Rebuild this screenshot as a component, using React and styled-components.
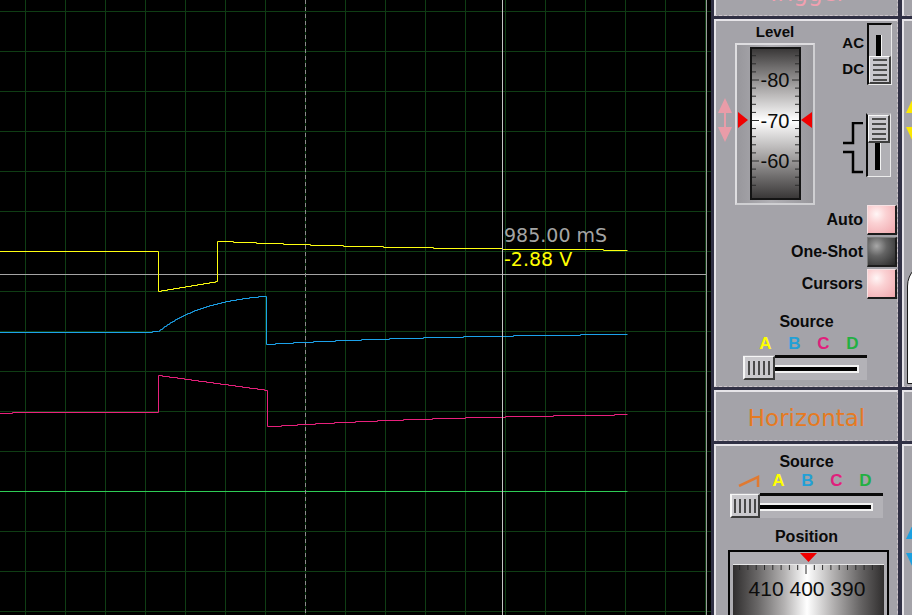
import React from 'react';
import styled, { createGlobalStyle } from 'styled-components';

const GlobalStyle = createGlobalStyle`
  html, body { margin: 0; padding: 0; background: #000; overflow: hidden; }
  body { font-family: "Liberation Sans", Arial, sans-serif; }
`;

/* ---------- plot data ---------- */
const px = (v) => v + 0.5;

function stairs(f, x0, x1) {
  let d = '';
  let prev = Math.round(f(x0));
  for (let x = x0 + 1; x <= x1; x++) {
    const y = Math.round(f(x));
    if (y !== prev) {
      d += ` H${px(x)} V${px(y)}`;
      prev = y;
    }
  }
  return d + ` H${px(x1)}`;
}

function steps(list, end) {
  let d = '';
  list.forEach(([x, y]) => {
    d += ` H${px(x)} V${px(y)}`;
  });
  return d + ` H${px(end)}`;
}

const yellowPath =
  `M0 ${px(251)} H${px(158)} V${px(291)}` +
  stairs((x) => 291 - (10 * (x - 158)) / 59, 158, 217) +
  ` V${px(241)}` +
  steps(
    [
      [233, 242],
      [256, 243],
      [283, 244],
      [310, 245],
      [343, 246],
      [383, 247],
      [433, 248],
      [502, 249],
      [603, 250],
    ],
    627
  );

const bluePath =
  `M0 ${px(332)} H${px(152)} V${px(331)} H${px(158)}` +
  stairs((x) => 331 - 40 * (1 - Math.exp(-(x - 158) / 50)), 158, 266) +
  ` V${px(344)}` +
  stairs((x) => 344 - 12 * (1 - Math.exp(-(x - 266) / 200)), 266, 627);

const pinkPath =
  `M0 ${px(413)} H${px(12)} V${px(412)} H${px(158)} V${px(375)}` +
  stairs((x) => 375 + (15 * (x - 158)) / 109, 158, 267) +
  ` V${px(426)}` +
  stairs((x) => 426.4 - 15 * (1 - Math.exp(-(x - 267) / 220)), 267, 627);

const greenPath = `M0 ${px(491)} H${px(627)}`;

const gridX = Array.from({ length: 18 }, (_, i) => 25 + 40 * i);
const gridY = Array.from({ length: 16 }, (_, i) => 11 + 40 * i);

/* ---------- layout ---------- */
const Screen = styled.div`
  display: flex;
  width: 912px;
  height: 615px;
  overflow: hidden;
  background: #000;
`;

const Scope = styled.div`
  position: relative;
  flex: 0 0 711px;
  height: 615px;
  background: #000;
  overflow: hidden;
`;

const PlotSvg = styled.svg`
  display: block;
`;

const Readout = styled.div`
  position: absolute;
  left: 504px;
  top: ${(p) => p.$top}px;
  font-family: "DejaVu Sans", "Liberation Sans", sans-serif;
  font-size: 19px;
  line-height: 19px;
  color: ${(p) => p.$color};
  white-space: nowrap;
`;

const Panel = styled.div`
  flex: 1 1 auto;
  display: flex;
  gap: 4px;
  height: 615px;
  padding-left: 3px;
  background: #303044;
  overflow: hidden;
`;

const Column = styled.div`
  flex: 0 0 184px;
  width: 184px;
  display: flex;
  flex-direction: column;
  gap: 3px;
  margin-top: -35px;
`;

const Box = styled.div`
  box-sizing: border-box;
  flex: 0 0 ${(p) => p.$h}px;
  height: ${(p) => p.$h}px;
  background: #a4a3a9;
  border-top: 2px solid #e6e4e8;
  border-left: 2px solid #e6e4e8;
  border-right: 1px dashed #cdc4ca;
  border-bottom: 1px dashed #cdc4ca;
  display: flex;
  flex-direction: column;
  overflow: hidden;
`;

const Title = styled.div`
  padding-top: 15px;
  text-align: center;
  font-family: "DejaVu Sans", "Liberation Sans", sans-serif;
  font-size: 23px;
  line-height: 23px;
  color: ${(p) => p.$color};
  white-space: nowrap;
`;

const Label = styled.div`
  font-family: "Liberation Sans", Arial, sans-serif;
  font-weight: bold;
  font-size: ${(p) => p.$size || 16}px;
  line-height: 18px;
  color: #0a0a0a;
  text-align: ${(p) => p.$align || 'center'};
  white-space: nowrap;
  margin-top: ${(p) => p.$mt || 0}px;
`;

/* ---------- trigger top area ---------- */
const TopArea = styled.div`
  display: flex;
  align-items: flex-start;
  height: 184px;
  flex: 0 0 184px;
`;

const ArrowWrap = styled.div`
  flex: 0 0 14px;
  width: 14px;
  height: 44px;
  margin: ${(p) => p.$mt}px 0 0 ${(p) => p.$ml}px;
  svg { display: block; }
`;

const LevelCol = styled.div`
  display: flex;
  flex-direction: column;
  width: 80px;
  margin-left: 3px;
`;

const DrumFrame = styled.div`
  position: relative;
  box-sizing: border-box;
  width: 80px;
  height: 162px;
  margin-top: 2px;
  border: 2px solid #dedde0;
  border-right-color: #cfcfd2;
  border-bottom-color: #cfcfd2;
  background: linear-gradient(to right, #98979c 0%, #b0afb4 45%, #98979c 100%);
  display: flex;
  justify-content: center;
  padding: 2px 0 3px;
`;

const DrumFace = styled.div`
  position: relative;
  box-sizing: border-box;
  width: 51px;
  border: 2px solid #141414;
  background: linear-gradient(
    to bottom,
    #3a3838 0%,
    #6e6c6c 12%,
    #b8b6b6 30%,
    #ffffff 48%,
    #bdbbbb 66%,
    #6e6c6c 86%,
    #3a3838 100%
  );
  display: flex;
  flex-direction: column;
  align-items: center;
  padding-top: 11px;
`;

const DrumNumber = styled.div`
  position: relative;
  font-family: "Liberation Sans", Arial, sans-serif;
  font-size: 20px;
  line-height: 40.5px;
  color: #0c0c0c;
`;

const TickSvg = styled.svg`
  position: absolute;
  left: 0;
  top: 0;
`;

const Marker = styled.svg`
  position: absolute;
  top: 67px;
  left: ${(p) => p.$left}px;
`;

const SwitchCol = styled.div`
  display: flex;
  flex-direction: column;
  margin-left: 27px;
`;

const SwitchGroup = styled.div`
  display: flex;
  align-items: flex-start;
  margin-top: ${(p) => p.$mt}px;
`;

const CouplingLabels = styled.div`
  display: flex;
  flex-direction: column;
  gap: 8px;
  width: 22px;
  margin-top: 11px;
`;

const SwitchTrack = styled.div`
  box-sizing: border-box;
  width: 25px;
  height: ${(p) => p.$h}px;
  margin-left: ${(p) => p.$ml}px;
  background: #b1b0b5;
  border-left: 2px solid #0c0c0c;
  border-top: 2px solid ${(p) => (p.$pos === 'bottom' ? '#0c0c0c' : '#b1b0b5')};
  border-right: 1px solid #ececec;
  border-bottom: 1px solid #ececec;
  display: flex;
  flex-direction: column;
`;

const Slot = styled.div`
  flex: 1;
  display: flex;
  padding: ${(p) => (p.$pos === 'bottom' ? '10px 0 0 7px' : '0 0 6px 7px')};
  &::before {
    content: '';
    width: 5px;
    background: #000;
    border-right: 1px solid #f4f4f4;
  }
`;

const VThumb = styled.div`
  box-sizing: border-box;
  flex: 0 0 28px;
  background: #c8c7cc;
  border-top: 1px solid #f8f8f8;
  border-left: 1px solid #f8f8f8;
  border-right: 2px solid #3e3e3e;
  border-bottom: 2px solid #3e3e3e;
  display: flex;
  align-items: center;
  justify-content: center;
`;

const VGrip = styled.div`
  width: 14px;
  height: 22px;
  background: repeating-linear-gradient(to bottom, #4c4c4c 0 2px, transparent 2px 5px);
`;

const EdgeSvg = styled.svg`
  display: block;
  margin: 9px 0 0 1px;
`;

/* ---------- buttons ---------- */
const ButtonStack = styled.div`
  display: flex;
  flex-direction: column;
  gap: 2px;
`;

const ButtonRow = styled.div`
  display: flex;
  align-items: center;
  justify-content: flex-end;
  gap: 4px;
`;

const LedButton = styled.div`
  box-sizing: border-box;
  width: 30px;
  height: 30px;
  border-top: 1px solid ${(p) => (p.$dark ? '#7c7c7c' : '#f6e2e4')};
  border-left: 1px solid ${(p) => (p.$dark ? '#7c7c7c' : '#f6e2e4')};
  border-right: 2px solid #1c1c1c;
  border-bottom: 2px solid #1c1c1c;
  background: ${(p) =>
    p.$dark
      ? 'radial-gradient(circle at 32% 30%, #a8a8a8 0%, #646464 38%, #262626 100%)'
      : 'radial-gradient(circle at 32% 30%, #fff6f6 0%, #fbd2d4 35%, #f0a6ac 100%)'};
`;

/* ---------- source / sliders ---------- */
const ChannelRow = styled.div`
  display: flex;
  align-items: center;
  margin: ${(p) => p.$m};
`;

const ChannelLetter = styled.div`
  width: 29px;
  text-align: center;
  font-family: "Liberation Sans", Arial, sans-serif;
  font-weight: bold;
  font-size: 17px;
  line-height: 18px;
  color: ${(p) => p.$color};
`;

const RampSvg = styled.svg`
  display: block;
  margin-right: 4px;
`;

const SliderBox = styled.div`
  box-sizing: border-box;
  display: flex;
  width: ${(p) => p.$w}px;
  height: 25px;
  margin: ${(p) => p.$m};
  background: #b3b2b7;
`;

const SliderThumb = styled.div`
  box-sizing: border-box;
  flex: 0 0 ${(p) => p.$w}px;
  margin-top: 1px;
  background: #cac9cd;
  border-top: 1px solid #f6f6f6;
  border-left: 2px solid #f6f6f6;
  border-right: 2px solid #3c3c3c;
  border-bottom: 2px solid #3c3c3c;
  display: flex;
  align-items: center;
  justify-content: center;
`;

const HGrip = styled.div`
  width: 22px;
  height: 14px;
  background: repeating-linear-gradient(to right, #4a4a4a 0 2px, transparent 2px 5px);
`;

const SliderRail = styled.div`
  flex: 1;
  display: flex;
  align-items: center;
  border-top: 3px solid #0a0a0a;
  padding-right: ${(p) => p.$pr}px;
`;

const Groove = styled.div`
  flex: 1;
  height: 4px;
  background: #000;
  border: 2px solid #f2f2f2;
  border-left: none;
`;

/* ---------- position display ---------- */
const PosFrame = styled.div`
  box-sizing: border-box;
  width: 161px;
  height: 72px;
  margin: 4px 0 0 12px;
  border: 2px solid #050505;
  background: #aeadb2;
  padding: 0 3px;
  display: flex;
  flex-direction: column;
`;

const PointerRow = styled.div`
  flex: 0 0 11px;
  display: flex;
  justify-content: center;
  padding-top: 1px;
  svg { display: block; }
`;

const DrumH = styled.div`
  position: relative;
  flex: 1;
  border-top: 1px solid #e8e8e8;
  background: linear-gradient(
    to right,
    #302e2e 0%,
    #686666 16%,
    #b4b2b2 34%,
    #ffffff 49%,
    #b4b2b2 66%,
    #686666 84%,
    #302e2e 100%
  );
  display: flex;
  justify-content: center;
  padding: 12px 3px 0 0;
`;

const PosNumbers = styled.div`
  position: relative;
  font-family: "Liberation Sans", Arial, sans-serif;
  font-size: 21px;
  line-height: 24px;
  color: #0c0c0c;
  white-space: nowrap;
`;

/* ---------- right column ---------- */
const KnobFace = styled.div`
  box-sizing: border-box;
  width: 60px;
  height: 122px;
  margin: ${(p) => p.$mt}px 0 0 3px;
  background: #fff;
  border: 1px solid #1a1a1a;
  border-top-left-radius: 24px;
`;

/* ---------- small drawings ---------- */
function DoubleArrow({ color }) {
  return (
    <svg width="14" height="44" viewBox="0 0 14 44">
      <polygon points="7,0 14,15 0,15" fill={color} />
      <rect x="6" y="15" width="2" height="14" fill={color} />
      <polygon points="0,29 14,29 7,44" fill={color} />
    </svg>
  );
}

function LevelTicks() {
  const ticks = [];
  for (let k = -3; k <= 13; k++) {
    const y = 31 + 8.1 * k;
    if (y < 2 || y > 146) continue;
    const len = k % 5 === 0 ? 7 : 4;
    ticks.push(
      <g key={k}>
        <line x1="0" y1={y} x2={len} y2={y} stroke="#2c2c2c" strokeWidth="1" />
        <line x1={47 - len} y1={y} x2="47" y2={y} stroke="#2c2c2c" strokeWidth="1" />
      </g>
    );
  }
  return (
    <TickSvg width="47" height="148">
      {ticks}
    </TickSvg>
  );
}

function PosTicks() {
  const ticks = [];
  for (let k = -9; k <= 9; k++) {
    const x = 73 + 8.3 * k;
    if (x < 1 || x > 149) continue;
    const len = k === 0 ? 9 : 5;
    ticks.push(<line key={k} x1={x} y1="0" x2={x} y2={len} stroke="#2a2a2a" strokeWidth="1" />);
  }
  return (
    <TickSvg width="150" height="10">
      {ticks}
    </TickSvg>
  );
}

function VSwitch({ pos, h, ml }) {
  return (
    <SwitchTrack $pos={pos} $h={h} $ml={ml}>
      {pos === 'top' && (
        <VThumb>
          <VGrip />
        </VThumb>
      )}
      <Slot $pos={pos} />
      {pos === 'bottom' && (
        <VThumb>
          <VGrip />
        </VThumb>
      )}
    </SwitchTrack>
  );
}

function Slider({ w, thumb, pr, m }) {
  return (
    <SliderBox $w={w} $m={m}>
      <SliderThumb $w={thumb}>
        <HGrip />
      </SliderThumb>
      <SliderRail $pr={pr}>
        <Groove />
      </SliderRail>
    </SliderBox>
  );
}

const CH = [
  ['A', '#ffff00'],
  ['B', '#22a0d6'],
  ['C', '#e0207c'],
  ['D', '#22b042'],
];

export default function App() {
  return (
    <>
      <GlobalStyle />
      <Screen>
        <Scope>
          <PlotSvg width="711" height="615" viewBox="0 0 711 615">
            <rect x="0" y="0" width="711" height="615" fill="#000" />
            {gridX.map((x) => (
              <line key={'gx' + x} x1={px(x)} y1="0" x2={px(x)} y2="615" stroke="#0f3d14" strokeWidth="1" />
            ))}
            {gridY.map((y) => (
              <line key={'gy' + y} x1="0" y1={px(y)} x2="711" y2={px(y)} stroke="#0f3d14" strokeWidth="1" />
            ))}
            <line x1={px(706)} y1="0" x2={px(706)} y2="615" stroke="#9a9a9a" strokeWidth="1" />
            <line x1="0" y1={px(274)} x2="706" y2={px(274)} stroke="#a4a4a4" strokeWidth="1" />
            <path d={greenPath} fill="none" stroke="#2ecc55" strokeWidth="1" />
            <path d={pinkPath} fill="none" stroke="#e8207c" strokeWidth="1" />
            <path d={bluePath} fill="none" stroke="#1ca2ea" strokeWidth="1" />
            <path d={yellowPath} fill="none" stroke="#ffff10" strokeWidth="1" />
            <line
              x1={px(305)}
              y1="0"
              x2={px(305)}
              y2="615"
              stroke="#8c8c8c"
              strokeWidth="1"
              strokeDasharray="4 3"
            />
            <line x1={px(502)} y1="0" x2={px(502)} y2="615" stroke="#c4c4c4" strokeWidth="1" />
          </PlotSvg>
          <Readout $top={226} $color="#a4a4a4">
            985.00 mS
          </Readout>
          <Readout $top={250} $color="#ffff00">
            -2.88 V
          </Readout>
        </Scope>

        <Panel>
          <Column>
            <Box $h={51}>
              <Title $color="#f2a0b0">Trigger</Title>
            </Box>

            <Box $h={368}>
              <TopArea>
                <ArrowWrap $mt={77} $ml={2}>
                  <DoubleArrow color="#e99ca8" />
                </ArrowWrap>
                <LevelCol>
                  <Label $size={15} $mt={2}>
                    Level
                  </Label>
                  <DrumFrame>
                    <DrumFace>
                      <LevelTicks />
                      <DrumNumber>-80</DrumNumber>
                      <DrumNumber>-70</DrumNumber>
                      <DrumNumber>-60</DrumNumber>
                    </DrumFace>
                    <Marker $left={1} width="10" height="16" viewBox="0 0 10 16">
                      <polygon points="0,0 10,8 0,16" fill="#f00000" />
                    </Marker>
                    <Marker $left={64} width="11" height="16" viewBox="0 0 11 16">
                      <polygon points="11,0 0,8 11,16" fill="#f00000" />
                    </Marker>
                  </DrumFrame>
                </LevelCol>
                <SwitchCol>
                  <SwitchGroup $mt={2}>
                    <CouplingLabels>
                      <Label $size={15} $align="right">
                        AC
                      </Label>
                      <Label $size={15} $align="right">
                        DC
                      </Label>
                    </CouplingLabels>
                    <VSwitch pos="bottom" h={62} ml={3} />
                  </SwitchGroup>
                  <SwitchGroup $mt={28}>
                    <EdgeSvg width="20" height="52" viewBox="0 0 20 52">
                      <path d="M20 1 H10 V21 H0" fill="none" stroke="#000" strokeWidth="2.5" />
                      <path d="M0 30 H10 V50 H20" fill="none" stroke="#000" strokeWidth="2.5" />
                    </EdgeSvg>
                    <VSwitch pos="top" h={64} ml={3} />
                  </SwitchGroup>
                </SwitchCol>
              </TopArea>

              <ButtonStack>
                <ButtonRow>
                  <Label $align="right">Auto</Label>
                  <LedButton />
                </ButtonRow>
                <ButtonRow>
                  <Label $align="right">One-Shot</Label>
                  <LedButton $dark />
                </ButtonRow>
                <ButtonRow>
                  <Label $align="right">Cursors</Label>
                  <LedButton />
                </ButtonRow>
              </ButtonStack>

              <Label $mt={14}>Source</Label>
              <ChannelRow $m="4px 0 0 35px">
                {CH.map(([l, c]) => (
                  <ChannelLetter key={l} $color={c}>
                    {l}
                  </ChannelLetter>
                ))}
              </ChannelRow>
              <Slider w={124} thumb={32} pr={8} m="2px 0 0 27px" />
            </Box>

            <Box $h={51}>
              <Title $color="#e67a22">Horizontal</Title>
            </Box>

            <Box $h={200}>
              <Label $mt={7}>Source</Label>
              <ChannelRow $m="1px 0 0 22px">
                <RampSvg width="22" height="12" viewBox="0 0 22 12">
                  <path d="M1 11 L20 2 V12" fill="none" stroke="#e07a32" strokeWidth="2.5" />
                </RampSvg>
                {CH.map(([l, c]) => (
                  <ChannelLetter key={l} $color={c}>
                    {l}
                  </ChannelLetter>
                ))}
              </ChannelRow>
              <Slider w={153} thumb={30} pr={10} m="3px 0 0 14px" />
              <Label $mt={10}>Position</Label>
              <PosFrame>
                <PointerRow>
                  <svg width="17" height="9" viewBox="0 0 17 9">
                    <polygon points="0,0 17,0 8.5,9" fill="#f00000" />
                  </svg>
                </PointerRow>
                <DrumH>
                  <PosTicks />
                  <PosNumbers>410 400 390</PosNumbers>
                </DrumH>
              </PosFrame>
            </Box>
          </Column>

          <Column>
            <Box $h={51} />
            <Box $h={368}>
              <ArrowWrap $mt={77} $ml={2}>
                <DoubleArrow color="#fbe800" />
              </ArrowWrap>
              <KnobFace $mt={120} />
            </Box>
            <Box $h={51} />
            <Box $h={200}>
              <ArrowWrap $mt={78} $ml={2}>
                <DoubleArrow color="#1ca0e0" />
              </ArrowWrap>
            </Box>
          </Column>
        </Panel>
      </Screen>
    </>
  );
}
